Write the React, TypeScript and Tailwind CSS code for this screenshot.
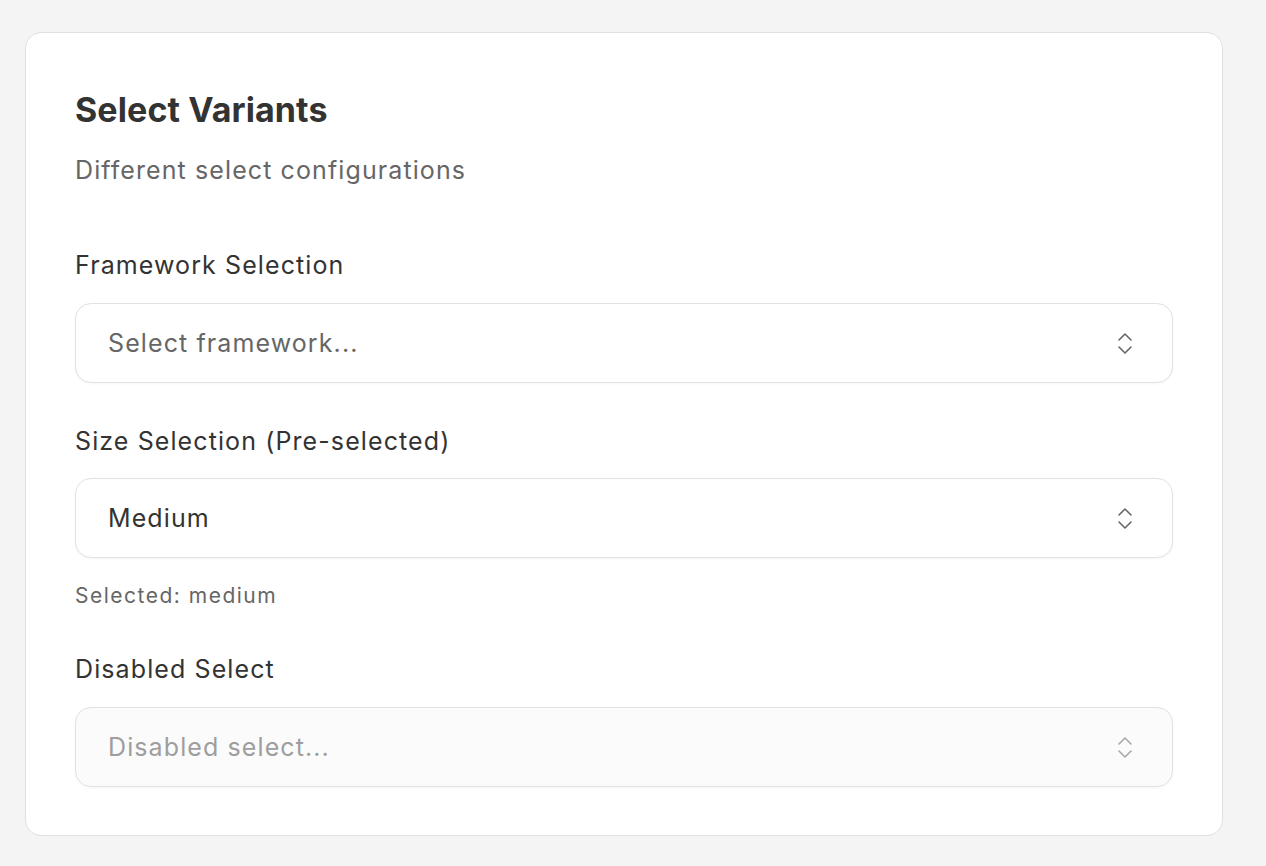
import React, { useState } from 'react';

function Chevrons({ className }: { className?: string }) {
  return (
    <svg width="14" height="21" viewBox="0 0 14 21" fill="none" className={className}>
      <polyline points="1,7 7,1 13,7" stroke="currentColor" strokeWidth="1.6" strokeLinecap="round" strokeLinejoin="round" />
      <polyline points="1,14 7,20 13,14" stroke="currentColor" strokeWidth="1.6" strokeLinecap="round" strokeLinejoin="round" />
    </svg>
  );
}

function SelectBox({ value, placeholder, disabled }: { value?: string; placeholder: string; disabled?: boolean }) {
  return (
    <button
      type="button"
      disabled={disabled}
      className={
        'flex h-[80px] w-full items-center justify-between rounded-2xl border border-[#e2e2e2] pl-[32px] pr-[40px] pt-[2px] text-left text-[25px] tracking-[1.1px] shadow-[0_1px_3px_rgba(0,0,0,0.04)] ' +
        (disabled ? 'bg-[#fbfbfb] cursor-not-allowed' : 'bg-white')
      }
    >
      <span className={disabled ? 'text-[#9e9e9e]' : value ? 'text-[#333333]' : 'text-[#666666]'}>
        {value ?? placeholder}
      </span>
      <Chevrons className={disabled ? 'text-[#a8a8a8] -mt-[2px]' : 'text-[#666666] -mt-[2px]'} />
    </button>
  );
}

export default function App() {
  const [size] = useState('medium');

  return (
    <div className="min-h-[866px] bg-[#f4f4f4] pt-8 pl-[25px] font-['Inter',sans-serif]">
      <div className="w-[1198px] rounded-2xl border border-[#e0e0e0] bg-white px-[49px] pt-[57px] pb-[48px]">
        <h2 className="text-[34px] font-bold leading-[40px] tracking-[0.1px] text-[#333333]">Select Variants</h2>
        <p className="mt-[24px] text-[25px] leading-[32px] tracking-[1.1px] text-[#666666]">Different select configurations</p>

        <div className="mt-[63px]">
          <label className="block text-[25px] leading-[32px] tracking-[1.1px] text-[#333333]">Framework Selection</label>
          <div className="mt-[22px]">
            <SelectBox placeholder="Select framework..." />
          </div>
        </div>

        <div className="mt-[42px]">
          <label className="block text-[25px] leading-[32px] tracking-[1.1px] text-[#333333]">Size Selection (Pre-selected)</label>
          <div className="mt-[21px]">
            <SelectBox placeholder="Select size..." value="Medium" />
          </div>
          <p className="mt-[24px] text-[21px] leading-[28px] tracking-[1.5px] text-[#666666]">Selected: {size}</p>
        </div>

        <div className="mt-[43px]">
          <label className="block text-[25px] leading-[32px] tracking-[1.1px] text-[#333333]">Disabled Select</label>
          <div className="mt-[22px]">
            <SelectBox placeholder="Disabled select..." disabled />
          </div>
        </div>
      </div>
    </div>
  );
}
